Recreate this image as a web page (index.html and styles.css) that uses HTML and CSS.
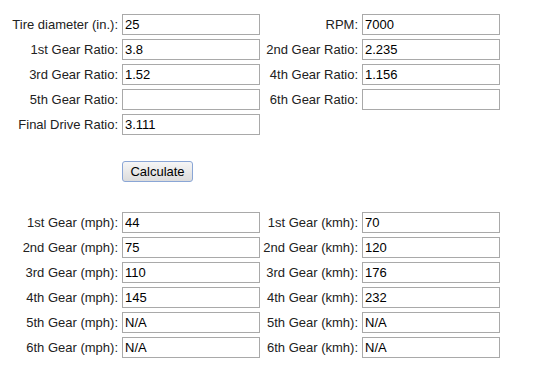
FILE: index.html
```html
<!DOCTYPE html>
<html lang="en">
<head>
    <meta charset="UTF-8">
    <title>Gear Speed Calculator</title>
    <link rel="stylesheet" href="styles.css">
</head>
<body>
    <form id="gearForm">
        <div class="grid">
            <label>Tire diameter (in.):</label><input type="text" value="25">
            <label>RPM:</label><input type="text" value="7000">
            <label>1st Gear Ratio:</label><input type="text" value="3.8">
            <label>2nd Gear Ratio:</label><input type="text" value="2.235">
            <label>3rd Gear Ratio:</label><input type="text" value="1.52">
            <label>4th Gear Ratio:</label><input type="text" value="1.156">
            <label>5th Gear Ratio:</label><input type="text" value="">
            <label>6th Gear Ratio:</label><input type="text" value="">
            <label>Final Drive Ratio:</label><input type="text" value="3.111">
        </div>

        <div class="actions">
            <button type="button">Calculate</button>
        </div>

        <div class="grid results">
            <label>1st Gear (mph):</label><input type="text" value="44">
            <label>1st Gear (kmh):</label><input type="text" value="70">
            <label>2nd Gear (mph):</label><input type="text" value="75">
            <label>2nd Gear (kmh):</label><input type="text" value="120">
            <label>3rd Gear (mph):</label><input type="text" value="110">
            <label>3rd Gear (kmh):</label><input type="text" value="176">
            <label>4th Gear (mph):</label><input type="text" value="145">
            <label>4th Gear (kmh):</label><input type="text" value="232">
            <label>5th Gear (mph):</label><input type="text" value="N/A">
            <label>5th Gear (kmh):</label><input type="text" value="N/A">
            <label>6th Gear (mph):</label><input type="text" value="N/A">
            <label>6th Gear (kmh):</label><input type="text" value="N/A">
        </div>
    </form>
</body>
</html>
```

FILE: styles.css
```css
body { margin: 8px; background: #fff; color: #222; font-family: "Liberation Sans", Arial, sans-serif; font-size: 13px; }
.grid { display: grid; grid-template-columns: 108px 138px 96px 138px; column-gap: 3px; row-gap: 4px; padding: 6px 0 0 3px; }
.grid label { text-align: right; align-self: center; padding-right: 1px; white-space: nowrap; }
.grid input { height: 21px; box-sizing: border-box; border: 1px solid #a9a9a9; padding: 0 2px; margin: 0; font: inherit; color: #000; background: #fff; }
.actions { margin-top: 26px; padding-left: 114px; }
button { height: 21px; width: 71px; padding: 0; font: inherit; color: #000; border: 1px solid #8aa6d6; border-radius: 3px; background: linear-gradient(#f6f6f6, #dcdcdc); }
.results { margin-top: 30px; padding-top: 0; }
```
